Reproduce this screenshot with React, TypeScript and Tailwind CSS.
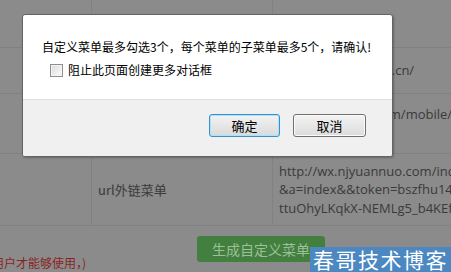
import React from 'react';

const cjk = { fontFamily: '"Noto Sans CJK SC", "Liberation Sans", sans-serif' };
const latin = { fontFamily: '"Open Sans", "Noto Sans CJK SC", sans-serif' };

const rows = [
  { h: 'h-[48px]', name: '', url: [] as string[] },
  { h: 'h-[46px]', name: '', url: ['http://v.njyuannuo.cn/'] },
  { h: 'h-[60px]', name: '', url: ['http://njyuanur.com/mobile/index', '&a=index'] },
  {
    h: 'h-[72px]',
    name: 'url外链菜单',
    url: ['http://wx.njyuannuo.com/index.php?g=Wap', '&a=index&&token=bszfhu1410', 'ttuOhyLKqkX-NEMLg5_b4KEfwGh'],
  },
];

export default function App() {
  return (
    <div className="relative w-[451px] h-[272px] overflow-hidden bg-[#8b8b8b] text-[#3a3a3a]">
      {/* dimmed page underneath */}
      <div className="flex flex-col">
        {rows.map((row, i) => (
          <div key={i} className={`grid grid-cols-[92px_181px_1fr] border-b border-[#818181] ${row.h}`}>
            <div className="border-r border-[#818181]" />
            <div className="flex items-center pl-[6px] border-r border-[#818181] text-[13px]" style={cjk}>
              {row.name}
            </div>
            <div className="flex flex-col justify-center pl-[6px] text-[13px] leading-[18.5px] whitespace-nowrap" style={latin}>
              {row.url.map((u, j) => (
                <span key={j}>{u}</span>
              ))}
            </div>
          </div>
        ))}
        <div className="flex h-[46px]">
          <p className="self-end -ml-[8px] mb-[1px] w-[205px] text-[12px] leading-[16px] text-[#8a2424]" style={cjk}>
            用户才能够使用，)
          </p>
          <button
            className="mt-[10px] h-[26px] px-[15px] rounded-[3px] bg-[#43803f] text-[#9dbf99] text-[14px] leading-[26px]"
            style={cjk}
          >
            生成自定义菜单
          </button>
        </div>
      </div>

      {/* alert dialog */}
      <div className="absolute left-[22px] top-[14px] w-[371px] h-[143px] flex flex-col border border-[#646464] rounded-[3px] bg-white shadow-[1px_1px_2px_rgba(0,0,0,0.25)] overflow-hidden text-[12px] text-black" style={cjk}>
        <div className="h-[85px] pt-[24px] pl-[19px] border-b border-[#dedede]">
          <p className="leading-[16px] whitespace-nowrap">自定义菜单最多勾选3个，每个菜单的子菜单最多5个，请确认!</p>
          <label className="flex items-center gap-[5px] mt-[7px] ml-[8px] leading-[16px]">
            <span className="w-[13px] h-[13px] border border-[#8e8f8f] bg-gradient-to-br from-[#dcdcdc] to-[#fbfbfb] shadow-[inset_0_0_0_1px_#f4f4f4]" />
            阻止此页面创建更多对话框
          </label>
        </div>
        <div className="flex-1 flex justify-end items-start gap-[13px] pt-[14px] pr-[26px] bg-[#f0f0f0]">
          <button className="w-[71px] h-[23px] rounded-[3px] border border-[#3c8fce] bg-gradient-to-b from-[#f3f3f3] to-[#dadada] shadow-[inset_0_0_0_1px_#a9e4f9] text-[13px] leading-[20px]">
            确定
          </button>
          <button className="w-[73px] h-[23px] rounded-[3px] border border-[#707070] bg-gradient-to-b from-[#f3f3f3] to-[#dcdcdc] shadow-[inset_0_0_0_1px_#fbfbfb] text-[13px] leading-[20px]">
            取消
          </button>
        </div>
      </div>

      {/* watermark */}
      <div className="absolute right-0 bottom-0 w-[141px] h-[25px] pl-[3px] bg-[#4b87c1] text-white text-[21px] leading-[25px] tracking-[1.5px] whitespace-nowrap" style={cjk}>
        春哥技术博客
      </div>
    </div>
  );
}
